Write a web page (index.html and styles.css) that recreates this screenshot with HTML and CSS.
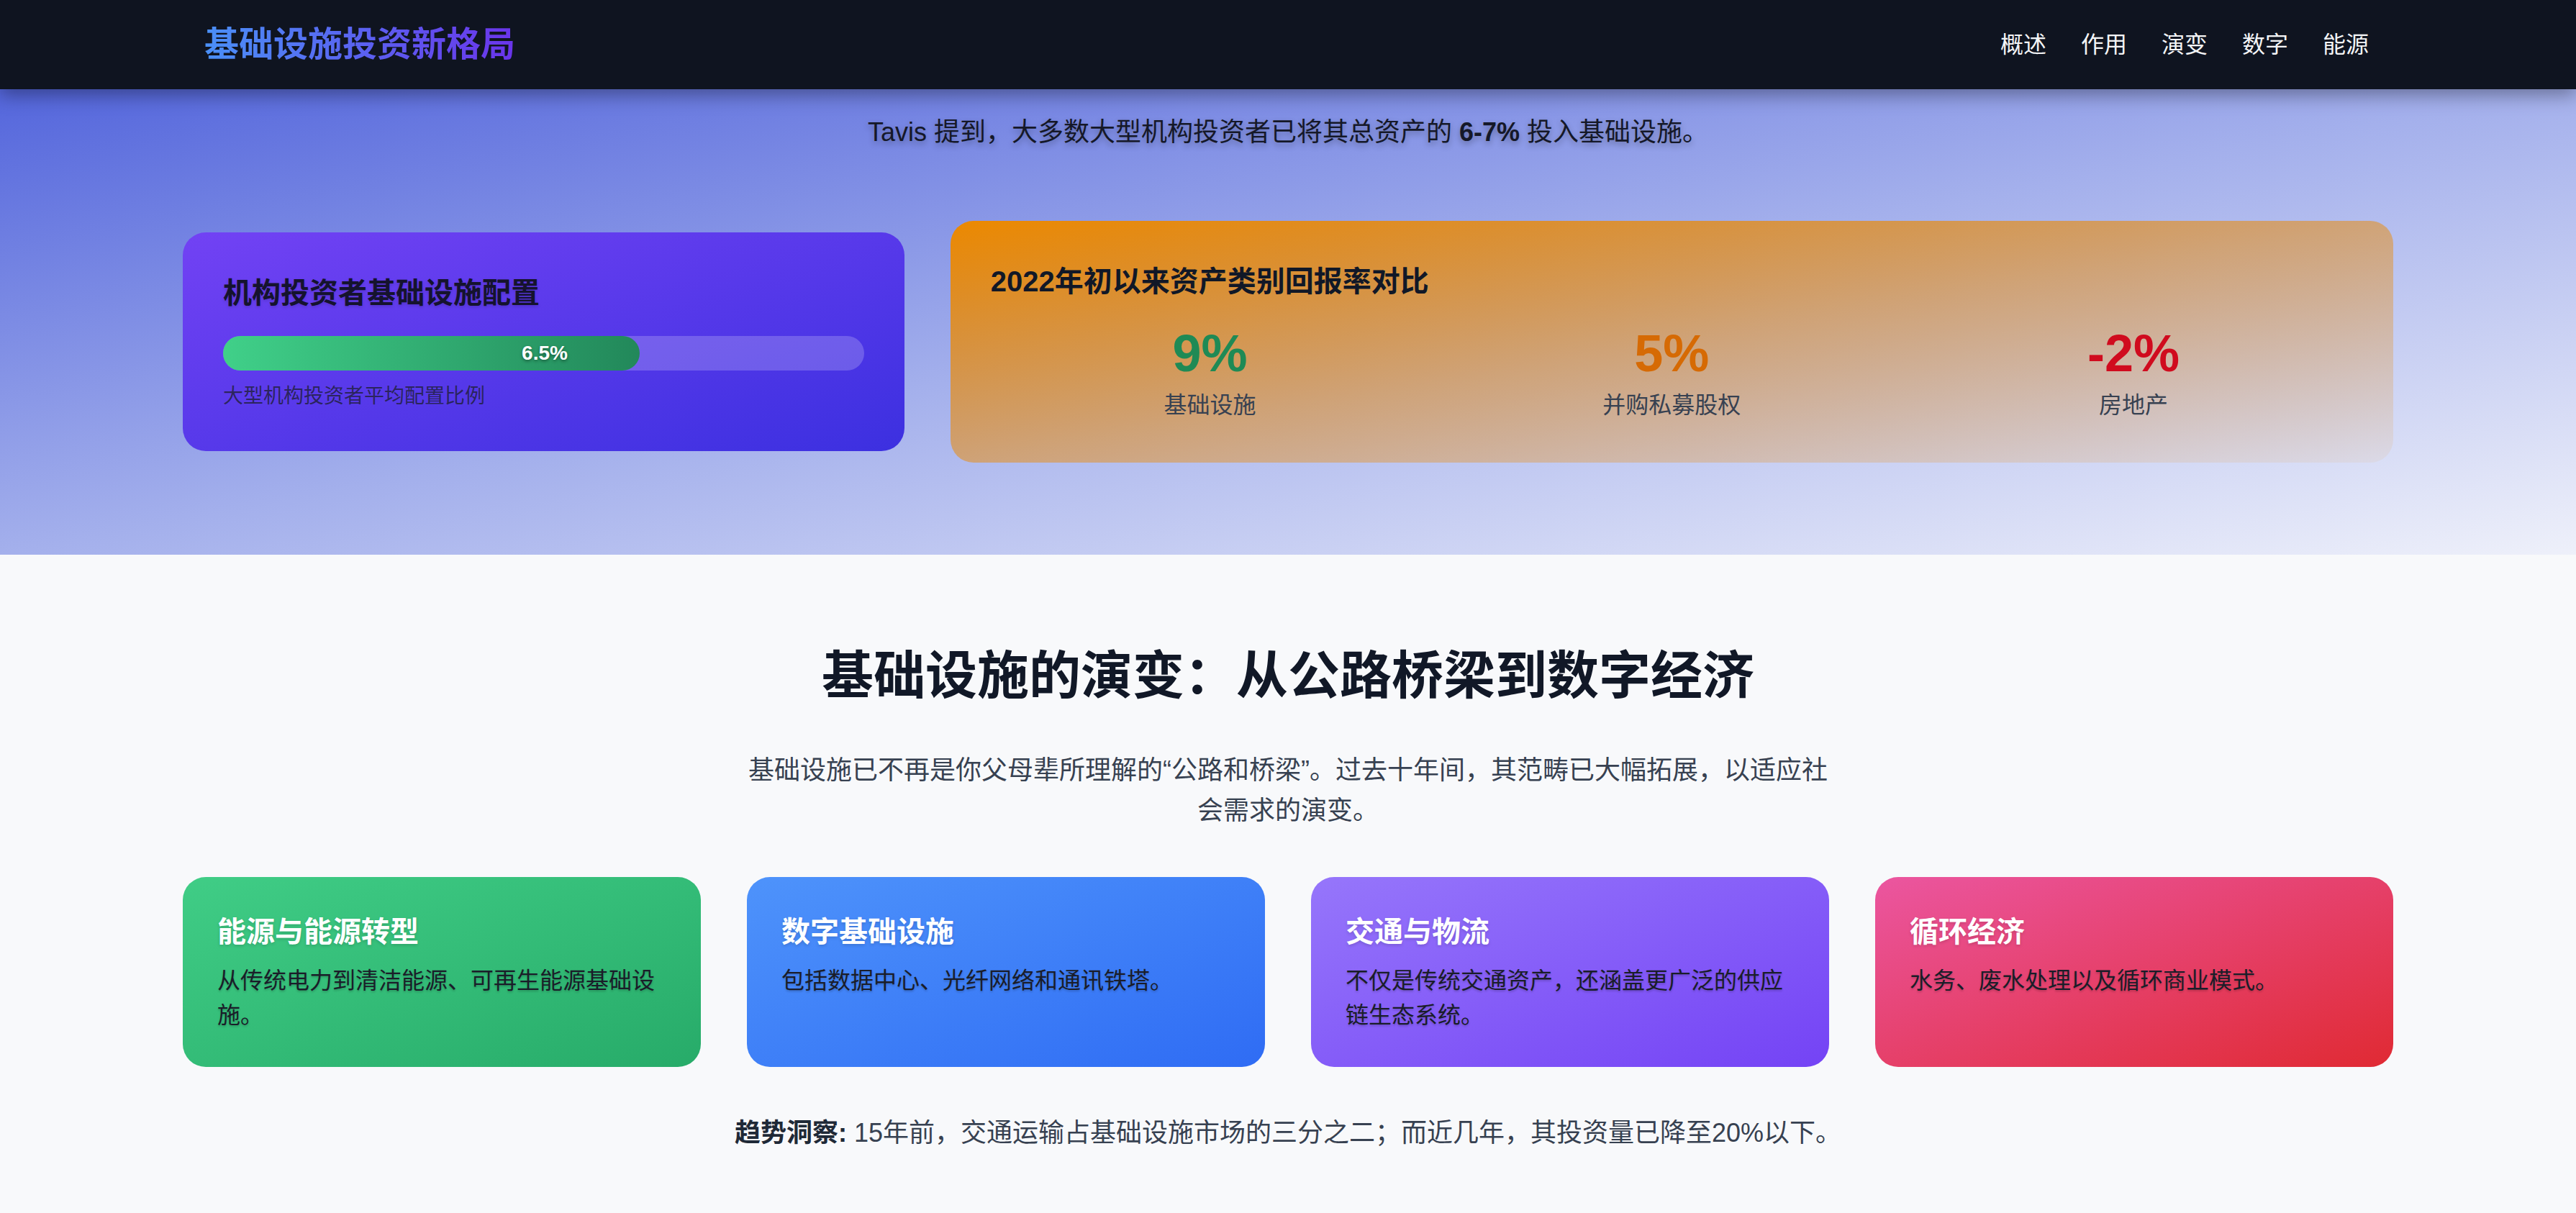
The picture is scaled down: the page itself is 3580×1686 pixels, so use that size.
FILE: index.html
```html
<!DOCTYPE html>
<html lang="zh-CN">
<head>
<meta charset="utf-8">
<title>基础设施投资新格局</title>
<link rel="stylesheet" href="styles.css">
</head>
<body>
<header class="nav">
  <div class="nav-inner">
    <div class="logo">基础设施投资新格局</div>
    <nav class="nav-links">
      <a href="#overview">概述</a>
      <a href="#role">作用</a>
      <a href="#evolution">演变</a>
      <a href="#digital">数字</a>
      <a href="#energy">能源</a>
    </nav>
  </div>
</header>

<section class="hero" id="overview">
  <p class="hero-text">Tavis 提到，大多数大型机构投资者已将其总资产的 <strong>6-7%</strong> 投入基础设施。</p>
  <div class="hero-grid">
    <div class="alloc-card">
      <h3 class="alloc-title">机构投资者基础设施配置</h3>
      <div class="bar-track">
        <div class="bar-fill" style="width: 65%"><span class="bar-label">6.5%</span></div>
      </div>
      <p class="alloc-note">大型机构投资者平均配置比例</p>
    </div>
    <div class="returns-card">
      <h3 class="returns-title">2022年初以来资产类别回报率对比</h3>
      <div class="stats">
        <div class="stat">
          <div class="stat-num green">9%</div>
          <div class="stat-label">基础设施</div>
        </div>
        <div class="stat">
          <div class="stat-num orange">5%</div>
          <div class="stat-label">并购私募股权</div>
        </div>
        <div class="stat">
          <div class="stat-num red">-2%</div>
          <div class="stat-label">房地产</div>
        </div>
      </div>
    </div>
  </div>
</section>

<section class="evolution" id="evolution">
  <h2 class="evo-title">基础设施的演变：从公路桥梁到数字经济</h2>
  <p class="evo-intro">基础设施已不再是你父母辈所理解的“公路和桥梁”。过去十年间，其范畴已大幅拓展，以适应社会需求的演变。</p>
  <div class="evo-grid">
    <div class="evo-card c-green">
      <h3 class="evo-card-title">能源与能源转型</h3>
      <p class="evo-card-text">从传统电力到清洁能源、可再生能源基础设施。</p>
    </div>
    <div class="evo-card c-blue">
      <h3 class="evo-card-title">数字基础设施</h3>
      <p class="evo-card-text">包括数据中心、光纤网络和通讯铁塔。</p>
    </div>
    <div class="evo-card c-purple">
      <h3 class="evo-card-title">交通与物流</h3>
      <p class="evo-card-text">不仅是传统交通资产，还涵盖更广泛的供应链生态系统。</p>
    </div>
    <div class="evo-card c-red">
      <h3 class="evo-card-title">循环经济</h3>
      <p class="evo-card-text">水务、废水处理以及循环商业模式。</p>
    </div>
  </div>
  <p class="trend"><strong>趋势洞察:</strong> 15年前，交通运输占基础设施市场的三分之二；而近几年，其投资量已降至20%以下。</p>
</section>
</body>
</html>
```

FILE: styles.css
```css
* { box-sizing: border-box; }

body {
  margin: 0;
  font-family: "Liberation Sans", "Noto Sans CJK SC", sans-serif;
  background: #f8f9fb;
  color: #111827;
}

h2, h3, p { margin: 0; }

/* nav */
.nav {
  position: relative;
  z-index: 2;
  height: 124px;
  background: #0f1420;
  box-shadow: 0 8px 24px rgba(0, 0, 0, 0.35);
}
.nav-inner {
  max-width: 3072px;
  height: 100%;
  margin: 0 auto;
  padding: 0 34px 0 30px;
  display: flex;
  align-items: center;
  justify-content: space-between;
}
.logo {
  font-size: 48px;
  font-weight: 700;
  line-height: 64px;
  background: linear-gradient(90deg, #4a90f7, #6a34ea);
  -webkit-background-clip: text;
  background-clip: text;
  color: transparent;
}
.nav-links {
  display: flex;
  gap: 48px;
}
.nav-links a {
  color: #f3f4f6;
  text-decoration: none;
  font-size: 32px;
  line-height: 48px;
}

/* hero */
.hero {
  background: linear-gradient(to bottom right, #5466dc 0%, #a4b0ec 50%, #eef0fa 100%);
  padding: 32px 0 128px;
}
.hero-text {
  text-align: center;
  font-size: 36px;
  line-height: 56px;
  color: #151828;
  text-shadow: 0 4px 8px rgba(0, 0, 0, 0.3);
  margin-bottom: 95px;
}
.hero-text strong { font-weight: 700; }

.hero-grid {
  max-width: 3072px;
  margin: 0 auto;
  display: grid;
  grid-template-columns: 1fr 2fr;
  gap: 64px;
  align-items: center;
}

.alloc-card {
  border-radius: 32px;
  padding: 56px;
  background: linear-gradient(to bottom right, #7242f4, #3c30e0);
}
.alloc-title {
  font-size: 40px;
  line-height: 56px;
  font-weight: 700;
  color: #15132e;
  text-shadow: 0 2px 4px rgba(0, 0, 0, 0.15);
  margin-bottom: 32px;
}
.bar-track {
  height: 48px;
  border-radius: 24px;
  background: rgba(255, 255, 255, 0.2);
}
.bar-fill {
  height: 100%;
  border-radius: 24px;
  background: linear-gradient(90deg, #40d089, #22885a);
  display: flex;
  align-items: center;
  justify-content: flex-end;
  padding-right: 100px;
}
.bar-label {
  color: #ffffff;
  font-size: 28px;
  font-weight: 700;
  text-shadow: 0 2px 4px rgba(0, 0, 0, 0.4);
}
.alloc-note {
  margin-top: 16px;
  font-size: 28px;
  line-height: 40px;
  color: rgba(31, 31, 55, 0.8);
}

.returns-card {
  border-radius: 32px;
  padding: 56px;
  background: linear-gradient(to bottom right, rgba(236, 137, 0, 1) 0%, rgba(236, 137, 0, 0.5) 50%, rgba(236, 137, 0, 0.06) 100%);
}
.returns-title {
  font-size: 40px;
  line-height: 56px;
  font-weight: 700;
  color: #111827;
  margin-bottom: 32px;
}
.stats {
  display: grid;
  grid-template-columns: repeat(3, 1fr);
  gap: 32px;
  text-align: center;
}
.stat-num {
  font-size: 72px;
  line-height: 80px;
  font-weight: 700;
}
.stat-num.green { color: #1f8a55; }
.stat-num.orange { color: #d66a04; }
.stat-num.red { color: #d00b1e; }
.stat-label {
  margin-top: 8px;
  font-size: 32px;
  line-height: 48px;
  color: #374151;
}

/* evolution */
.evolution {
  background: #f8f9fb;
  padding: 128px 0 128px;
}
.evo-title {
  text-align: center;
  font-size: 72px;
  line-height: 80px;
  font-weight: 700;
  color: #111827;
  margin-bottom: 64px;
}
.evo-intro {
  max-width: 1520px;
  margin: 0 auto 64px;
  text-align: center;
  font-size: 36px;
  line-height: 56px;
  color: #374151;
}
.evo-grid {
  max-width: 3072px;
  margin: 0 auto 64px;
  display: grid;
  grid-template-columns: repeat(4, 1fr);
  gap: 64px;
}
.evo-card {
  border-radius: 32px;
  padding: 48px;
}
.c-green { background: linear-gradient(to bottom right, #40cd86, #27ab69); }
.c-blue { background: linear-gradient(to bottom right, #4e93fb, #2f6cf4); }
.c-purple { background: linear-gradient(to bottom right, #9676fb, #7443f5); }
.c-red { background: linear-gradient(to bottom right, #eb56a0, #e02a33); }
.evo-card-title {
  font-size: 40px;
  line-height: 56px;
  font-weight: 700;
  color: #ffffff;
  text-shadow: 0 2px 4px rgba(0, 0, 0, 0.15);
  margin-bottom: 16px;
}
.evo-card-text {
  font-size: 32px;
  line-height: 48px;
  color: #1a1d29;
  text-shadow: 0 2px 3px rgba(0, 0, 0, 0.2);
}
.trend {
  text-align: center;
  font-size: 36px;
  line-height: 56px;
  color: #374151;
}
.trend strong {
  color: #1f2937;
  font-weight: 700;
}
```
